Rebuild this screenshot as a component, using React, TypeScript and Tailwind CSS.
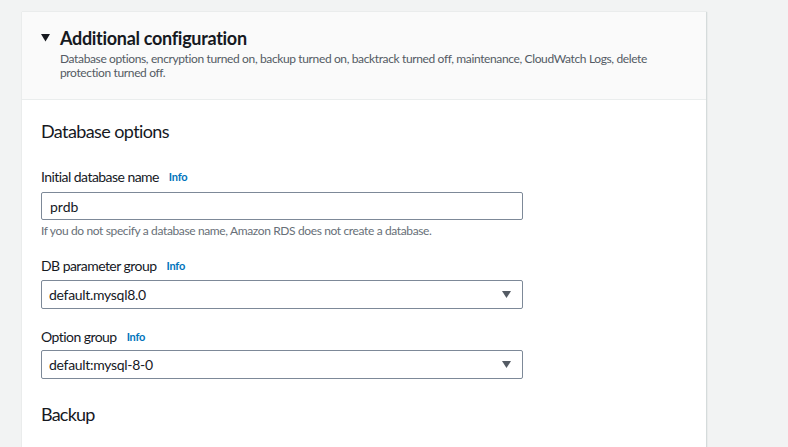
import { ReactNode } from "react"

function Info() {
  return <span className="ml-2.5 text-[11px] font-bold text-[#0073bb] tracking-[-0.2px]">Info</span>
}

function Label({ children }: { children: ReactNode }) {
  return (
    <div className="flex items-center h-5 text-[14px] leading-5 text-[#16191f] tracking-[-0.55px]">
      {children}
      <Info />
    </div>
  )
}

function Caret() {
  return (
    <svg width="9" height="7" viewBox="0 0 9 7" className="shrink-0">
      <path d="M0 0 H9 L4.5 7 Z" fill="#545b64" />
    </svg>
  )
}

function SelectBox({ value }: { value: string }) {
  return (
    <div className="flex items-center justify-between w-[482px] h-[29px] border border-[#7d8998] rounded-[2px] bg-white pl-[7px] pr-[11px] text-[14px] text-[#16191f] tracking-[-0.3px]">
      <span>{value}</span>
      <Caret />
    </div>
  )
}

export default function App() {
  return (
    <div
      className="w-[788px] h-[447px] overflow-hidden bg-[#f2f3f3] pt-3 pl-[22px]"
      style={{ fontFamily: 'Lato, "Open Sans", sans-serif' }}
    >
      <div className="w-[685px] h-[440px] bg-white border-r border-[#d5dbdb] shadow-[0_0_1px_rgba(0,28,36,0.2)]">
        <div className="bg-[#fafafa] border-b border-[#eaeded] pl-[19px] pt-[15px] pb-[19px]">
          <div className="flex items-center h-[22px]">
            <svg width="9" height="8" viewBox="0 0 9 8" className="mr-[10px]">
              <path d="M0 0 H9 L4.5 7.5 Z" fill="#16191f" />
            </svg>
            <h2 className="text-[18px] font-bold text-[#16191f] leading-[22px] tracking-[-0.3px]">Additional configuration</h2>
          </div>
          <p className="ml-[19px] mt-[3px] text-[12px] leading-[14px] text-[#545b64] w-[600px] tracking-[-0.37px]">
            Database options, encryption turned on, backup turned on, backtrack turned off, maintenance, CloudWatch Logs, delete
            protection turned off.
          </p>
        </div>
        <div className="pl-[19px] pt-[20px]">
          <h3 className="text-[18px] leading-[22px] text-[#16191f] tracking-[-0.6px]">Database options</h3>
          <div className="mt-[25px]">
            <Label>Initial database name</Label>
            <div className="mt-[5px] w-[482px] h-[28px] border border-[#7d8998] rounded-[2px] flex items-center px-2 text-[14px] text-[#16191f]">
              prdb
            </div>
            <p className="mt-[3px] text-[12px] leading-[16px] text-[#687078] tracking-[-0.37px]">
              If you do not specify a database name, Amazon RDS does not create a database.
            </p>
          </div>
          <div className="mt-[17px]">
            <Label>DB parameter group</Label>
            <div className="mt-[4px]">
              <SelectBox value="default.mysql8.0" />
            </div>
          </div>
          <div className="mt-[18px]">
            <Label>Option group</Label>
            <div className="mt-[3px]">
              <SelectBox value="default:mysql-8-0" />
            </div>
          </div>
          <h3 className="mt-[24px] text-[18px] leading-[22px] text-[#16191f] tracking-[-0.8px]">Backup</h3>
        </div>
      </div>
    </div>
  )
}
